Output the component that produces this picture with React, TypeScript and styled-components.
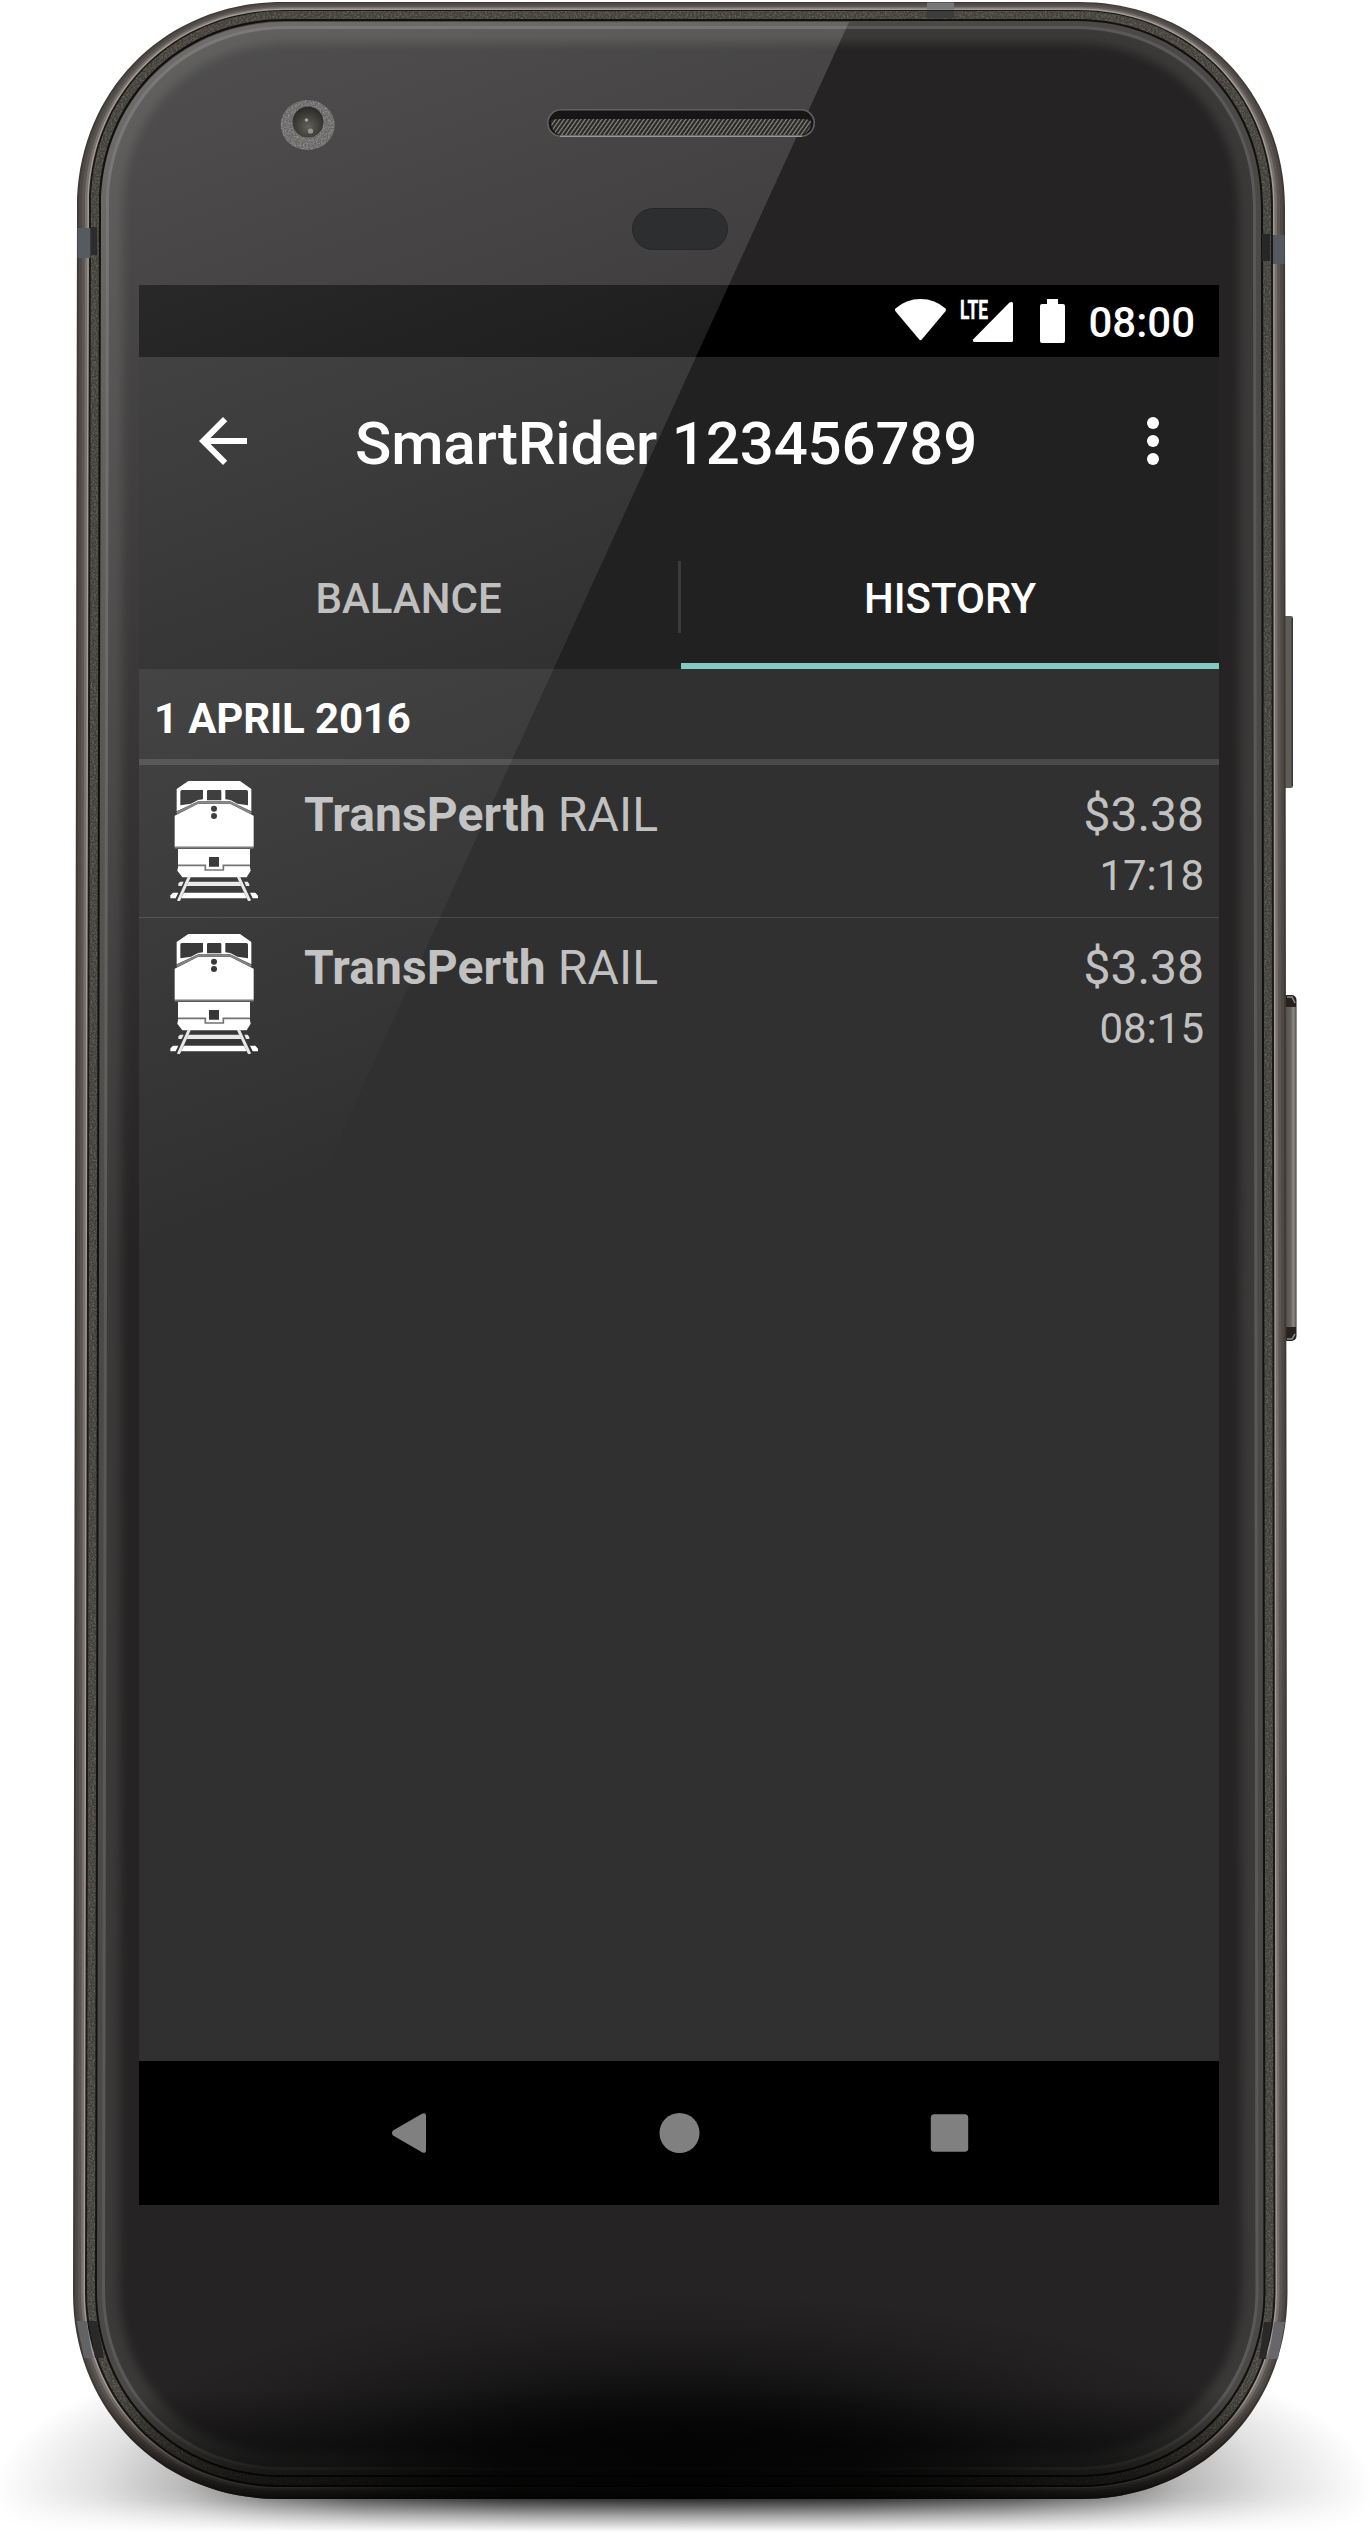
import React from 'react';
import styled, { createGlobalStyle } from 'styled-components';

const GlobalStyle = createGlobalStyle`
  html, body { margin: 0; padding: 0; background: #fff; }
  body { font-family: Roboto, "Liberation Sans", sans-serif; overflow: hidden; }
  * { box-sizing: border-box; }
`;

const Phone = styled.div`
  position: relative;
  width: 1370px;
  height: 2534px;
  padding: 285px 151px 329px 139px;
  overflow: hidden;
  background: #fff;
`;

const Artwork = styled.svg`
  position: absolute;
  inset: 0;
  pointer-events: none;
`;

const Screen = styled.main`
  position: relative;
  display: flex;
  flex-direction: column;
  width: 1080px;
  height: 1920px;
  background: #303030;
  color: #fff;
`;

const StatusBar = styled.div`
  display: flex;
  align-items: center;
  justify-content: flex-end;
  height: 72px;
  padding-right: 24px;
  background: #000;
`;

const Clock = styled.span`
  margin-left: 22px;
  padding-top: 4px;
  font-size: 42px;
  line-height: 48px;
  font-weight: 500;
`;

const Toolbar = styled.header`
  display: flex;
  align-items: center;
  height: 168px;
  padding: 0 30px 0 48px;
  background: #212121;
`;

const IconButton = styled.button`
  display: flex;
  width: 72px;
  height: 72px;
  padding: 0;
  border: 0;
  background: none;
  color: inherit;
`;

const Title = styled.h1`
  flex: 1;
  margin: 0 0 0 96px;
  padding-top: 5px;
  font-size: 60px;
  line-height: 72px;
  font-weight: 500;
  letter-spacing: -0.17px;
`;

const Tabs = styled.nav`
  display: grid;
  grid-template-columns: 539px 3px 538px;
  align-items: center;
  height: 144px;
  background: #212121;
`;

const Tab = styled.button<{ $active?: boolean }>`
  height: 144px;
  padding: ${p => (p.$active ? '9px 0 0' : '3px 0 0')};
  border: 0;
  border-bottom: ${p => (p.$active ? '6px solid #80cbc4' : '0')};
  background: none;
  font: 500 42px/48px Roboto, "Liberation Sans", sans-serif;
  color: ${p => (p.$active ? '#fff' : 'rgba(255, 255, 255, 0.7)')};
`;

const TabDivider = styled.span`
  height: 72px;
  background: #3b3b3b;
`;

const History = styled.section`
  flex: 1;
`;

const DateHeading = styled.h2`
  height: 96px;
  margin: 0;
  padding: 26px 16px 0 15px;
  border-bottom: 6px solid #4a4a4a;
  font-size: 42px;
  line-height: 48px;
  font-weight: 700;
  letter-spacing: -0.15px;
`;

const Trip = styled.article`
  display: flex;
  height: 152px;
  padding: 16px;
  color: #c1c1c1;

  & + & {
    height: 153px;
    border-top: 1px solid #4a4a4a;
  }
`;

const Operator = styled.div`
  flex: 1;
  padding: 6px 0 0 29px;
  font-size: 48px;
  line-height: 56px;
  letter-spacing: 0.12px;
`;

const Figures = styled.div`
  display: flex;
  flex-direction: column;
  align-items: flex-end;
  gap: 8px;
  margin-right: -1px;
  padding-top: 6px;
`;

const Fare = styled.span`
  font-size: 48px;
  line-height: 56px;
`;

const Time = styled.time`
  font-size: 42px;
  line-height: 50px;
`;

const NavBar = styled.footer`
  display: flex;
  align-items: center;
  justify-content: center;
  gap: 95px;
  height: 144px;
  background: #000;
  color: #808080;
`;

/* Outline of the handset; the sides widen slightly towards the bottom. */
function shell(i: number, topInset: number) {
  const lt = 77 + i, lb = 73 + i, rt = 1285 - i, rb = 1287.5 - i;
  const t = 2 + topInset, b = 2499 - i;
  const r = 206 - i * 0.9, k = r * 0.43;
  return [
    `M${lt + r} ${t}H${rt - r}`,
    `C${rt - k} ${t} ${rt} ${t + k} ${rt} ${t + r}`,
    `L${rb} ${b - r}`,
    `C${rb} ${b - k} ${rb - k} ${b} ${rb - r} ${b}`,
    `H${lb + r}`,
    `C${lb + k} ${b} ${lb} ${b - k} ${lb} ${b - r}`,
    `L${lt} ${t + r}`,
    `C${lt} ${t + k} ${lt + k} ${t} ${lt + r} ${t}Z`,
  ].join('');
}

const RINGS: [number, number, string][] = [
  [0, 0, '#3f3a37'],
  [2, 1, '#4f4946'],
  [5, 3, '#5c5652'],
  [8, 5, '#77716d'],
  [10.5, 6.5, '#a09b96'],
  [12, 8, '#1b1816'],
];

function Handset() {
  return (
    <Artwork width="1370" height="2534" viewBox="0 0 1370 2534" aria-hidden>
      <defs>
        <filter id="soft5" x="-5%" y="-5%" width="110%" height="110%" colorInterpolationFilters="sRGB"><feGaussianBlur stdDeviation="5" /></filter>
        <filter id="grain" x="0" y="0" width="100%" height="100%" colorInterpolationFilters="sRGB">
          <feTurbulence type="fractalNoise" baseFrequency="0.55" numOctaves="2" seed="4" />
          <feColorMatrix values="0 0 0 0 0.46  0 0 0 0 0.45  0 0 0 0 0.41  1.6 0 0 0 -0.6" />
          <feComposite in2="SourceGraphic" operator="in" result="n" />
          <feMerge><feMergeNode in="SourceGraphic" /><feMergeNode in="n" /></feMerge>
        </filter>
        <radialGradient id="floorShadow" gradientUnits="userSpaceOnUse" cx="0" cy="0" r="1" gradientTransform="translate(684 2490) scale(690 190)">
          <stop offset="0" stopOpacity=".92" /><stop offset=".27" stopOpacity=".86" />
          <stop offset=".48" stopOpacity=".7" /><stop offset=".61" stopOpacity=".5" />
          <stop offset=".72" stopOpacity=".28" /><stop offset=".85" stopOpacity=".12" />
          <stop offset="1" stopOpacity="0" />
        </radialGradient>
        <linearGradient id="floorFade" x1="0" y1="2490" x2="0" y2="2532" gradientUnits="userSpaceOnUse">
          <stop offset="0" stopColor="#fff" /><stop offset=".25" stopColor="#ddd" />
          <stop offset=".62" stopColor="#666" /><stop offset="1" stopColor="#000" />
        </linearGradient>
        <mask id="floorMask" maskUnits="userSpaceOnUse" x="0" y="2250" width="1370" height="284">
          <rect x="0" y="2250" width="1370" height="284" fill="url(#floorFade)" />
        </mask>
        <radialGradient id="chinShade" gradientUnits="userSpaceOnUse" cx="0" cy="0" r="1" gradientTransform="translate(682 2478) scale(600 185)">
          <stop offset="0" stopOpacity=".9" /><stop offset=".3" stopOpacity=".8" />
          <stop offset=".45" stopOpacity=".6" /><stop offset=".62" stopOpacity=".32" />
          <stop offset=".82" stopOpacity=".12" /><stop offset="1" stopOpacity="0" />
        </radialGradient>
        <linearGradient id="rimShade" x1="0" y1="2390" x2="0" y2="2499" gradientUnits="userSpaceOnUse">
          <stop offset="0" stopOpacity="0" /><stop offset="1" stopOpacity=".75" />
        </linearGradient>
        <linearGradient id="keyFace" x1="0" x2="1" y1="0" y2="0">
          <stop offset="0" stopColor="#4f4b47" /><stop offset=".55" stopColor="#66635c" />
          <stop offset=".8" stopColor="#8c8983" /><stop offset="1" stopColor="#5b5955" />
        </linearGradient>
        <clipPath id="bodyClip"><path d={shell(0, 0)} /></clipPath>
        <clipPath id="glassClip"><path d={shell(32, 27)} /></clipPath>
      </defs>

      <rect x="0" y="2290" width="1370" height="244" fill="url(#floorShadow)" mask="url(#floorMask)" />

      <rect x="1282" y="616" width="11" height="172" rx="2" fill="#5f5b57" />
      <rect x="1291.500" y="618" width="1.500" height="168" fill="#393633" />
      <rect x="1282" y="995" width="14.500" height="346" rx="5" fill="#24211f" />
      <rect x="1284" y="1007" width="12" height="320" fill="url(#keyFace)" />
      <path d="M1287 997h5l3 6M1287 1339h5l3-5" stroke="#8e8b86" strokeWidth="1.500" fill="none" />

      {RINGS.map(([i, t, fill]) => <path key={i} d={shell(i, t)} fill={fill} />)}
      <path d={shell(14, 9)} fill="#413f39" filter="url(#grain)" />
      <path d={shell(22, 17)} fill="#13110f" />
      <path d={shell(24, 19)} fill="#4a4947" />
      <path d={shell(29, 24)} fill="#5a5957" />
      <path d={shell(32, 27)} fill="#3b3a39" />
      <g clipPath="url(#glassClip)">
        <path d={shell(46, 41)} fill="#252324" filter="url(#soft5)" />
      </g>

      <g>
        <path d="M77.500 228h13v30h-13z" fill="#565a61" /><path d="M91 227h6v28h-6z" fill="#2c2c2e" />
        <path d="M1273 235h11.500v29H1273z" fill="#565860" /><path d="M1262 234h8v27h-8z" fill="#282727" />
        <path d="M927 2.500h27v7h-27z" fill="#77777b" /><path d="M927 11h27v7h-27z" fill="#3d3c3d" />
        <path d="M76.500 2321h10l6 37H84z" fill="#626365" /><path d="M89 2321h8l7 37H95z" fill="#29292a" />
        <path d="M1274 2322h11l-7 37h-9z" fill="#66666b" /><path d="M1264 2322h8l-6 37h-7z" fill="#29292a" />
      </g>

      <g clipPath="url(#bodyClip)">
        <rect x="60" y="2290" width="1240" height="215" fill="url(#chinShade)" />
        <rect x="60" y="2390" width="1240" height="112" fill="url(#rimShade)" />
      </g>
    </Artwork>
  );
}

function FrontGlass() {
  return (
    <Artwork width="1370" height="2534" viewBox="0 0 1370 2534" aria-hidden>
      <defs>
        <linearGradient id="glare" gradientUnits="userSpaceOnUse" x1="0" y1="0" x2="418" y2="1158">
          <stop offset="0" stopColor="#fff" stopOpacity=".215" />
          <stop offset="1" stopColor="#fff" stopOpacity="0" />
        </linearGradient>
        <pattern id="mesh" width="4.200" height="4" patternUnits="userSpaceOnUse" patternTransform="skewX(-35)">
          <rect width="4.200" height="4" fill="#2c2b29" /><rect width="1.600" height="4" fill="#7c7a76" />
        </pattern>
        <filter id="ringGrain" x="0" y="0" width="100%" height="100%" colorInterpolationFilters="sRGB">
          <feTurbulence type="fractalNoise" baseFrequency="0.6" numOctaves="2" seed="8" />
          <feColorMatrix values="0 0 0 0 0.6  0 0 0 0 0.595  0 0 0 0 0.59  2 0 0 0 -0.75" />
          <feComposite in2="SourceGraphic" operator="in" result="n" />
          <feMerge><feMergeNode in="SourceGraphic" /><feMergeNode in="n" /></feMerge>
        </filter>
        <radialGradient id="lens" cx=".5" cy=".65" r=".6">
          <stop offset="0" stopColor="#62615d" /><stop offset=".5" stopColor="#45443f" />
          <stop offset="1" stopColor="#2d2c29" />
        </radialGradient>
        <clipPath id="glareClip"><path d={shell(24, 20)} /></clipPath>
      </defs>
      <path d="M0 22H849L279 1270H0Z" fill="url(#glare)" clipPath="url(#glareClip)" />

      <ellipse cx="307.700" cy="125" rx="27" ry="25" fill="#696767" filter="url(#ringGrain)" />
      <circle cx="308" cy="122" r="15.500" fill="url(#lens)" />
      <circle cx="306.500" cy="120" r="1.800" fill="#a5a39f" />
      <circle cx="310.500" cy="131" r="2.600" fill="#989691" />

      <rect x="547.800" y="109.800" width="266.400" height="26.400" rx="13.200" fill="#171616" stroke="#62605f" strokeWidth="1.600" />
      <path d="M560 136.300H802" stroke="#9a9895" strokeWidth="1.400" />
      <path d="M551 121q2-2 6-2H804q4 0 7 2q1 6-4 11q-2 3-7 3H562q-5 0-8-4q-3-4-3-10Z" fill="url(#mesh)" />
      <rect x="632.500" y="208.500" width="95" height="41" rx="20.500" fill="#2d2e2f" stroke="#272728" />
    </Artwork>
  );
}

function StatusIcons() {
  return (
    <svg width="172" height="50" viewBox="894 296 172 50" fill="#fff" aria-hidden>
      <path d="M895.500 308.500Q906 299 920.500 299T945.500 308.500Q946.500 309.500 945.700 311L922 339.300Q920.500 341 919 339.300L895.300 311Q894.500 309.500 895.500 308.500Z" />
      <text x="960" y="319" fontFamily="Roboto, sans-serif" fontSize="25.500" fontWeight="700" textLength="28" lengthAdjust="spacingAndGlyphs" stroke="#fff" strokeWidth=".4">LTE</text>
      <path d="M1013 303.500V340.500Q1013 342 1011.500 342H974.500Q973 342 973 340.500V339.500L1009.500 302.500Q1013 301 1013 303.500Z" />
      <path d="M1047 299h11v5h5q2 0 2 2v35q0 2-2 2h-21q-2 0-2-2v-35q0-2 2-2h5z" />
    </svg>
  );
}

function TrainIcon() {
  return (
    <svg width="120" height="120" viewBox="75 303 360 360" fill="#fff" aria-hidden>
      <path fillRule="evenodd" d="M175 303H330L364 327V394L300 364H205L140 394V327Z
        M156 330Q151 330 151 335V376L183 371L204 360L219 358V330Z
        M235 330Q231 330 231 334V361H274V334Q274 330 270 330Z
        M286 330V358L301 360L322 371L354 376V335Q354 330 349 330Z" />
      <path d="M140 399L205 367H300L364 399" stroke="#808080" strokeWidth="6" fill="none" />
      <path fillRule="evenodd" d="M134 407L205 371H300L371 407V500H134Z
        M243 386a9 9 0 1 0 18 0a9 9 0 1 0-18 0Z M243 408a9 9 0 1 0 18 0a9 9 0 1 0-18 0Z" />
      <path d="M134 503H371" stroke="#777" strokeWidth="5" />
      <path fillRule="evenodd" d="M144 507H360V562L362 572L350 592H157L142 572L144 562Z M237 531V560H267V531Z" />
      <path d="M144 556H226V570H280V556H360" stroke="#6d6d6d" strokeWidth="5" fill="none" />
      <path d="M178 590L145 663M325 590L359 663" stroke="#e6e6e6" strokeWidth="9" />
      <path fill="#e8e8e8" d="M151 605h10l-6 13h-10v-8zM176 605H328L334 618H170zM343 605h10l5 7v6h-10z" />
      <path d="M129 638h16l-8 17h-16v-9zM162 638H342L350 655H153zM360 638h16l8 9v8h-16z" />
    </svg>
  );
}

const trips = [
  { operator: 'TransPerth', mode: 'RAIL', fare: '$3.38', time: '17:18' },
  { operator: 'TransPerth', mode: 'RAIL', fare: '$3.38', time: '08:15' },
];

export default function App() {
  return (
    <>
      <GlobalStyle />
      <Phone>
        <Handset />
        <Screen>
          <StatusBar>
            <StatusIcons />
            <Clock>08:00</Clock>
          </StatusBar>
          <Toolbar>
            <IconButton aria-label="Back">
              <svg width="72" height="72" viewBox="0 0 24 24" fill="currentColor">
                <path d="M20 11H7.830l5.590-5.590L12 4l-8 8 8 8 1.410-1.410L7.830 13H20v-2z" />
              </svg>
            </IconButton>
            <Title>SmartRider 123456789</Title>
            <IconButton aria-label="More">
              <svg width="72" height="72" viewBox="0 0 24 24" fill="currentColor">
                <circle cx="12" cy="6" r="2" /><circle cx="12" cy="12" r="2" /><circle cx="12" cy="18" r="2" />
              </svg>
            </IconButton>
          </Toolbar>
          <Tabs>
            <Tab>BALANCE</Tab>
            <TabDivider />
            <Tab $active>HISTORY</Tab>
          </Tabs>
          <History>
            <DateHeading>1 APRIL 2016</DateHeading>
            {trips.map(trip => (
              <Trip key={trip.time}>
                <TrainIcon />
                <Operator><b>{trip.operator}</b> {trip.mode}</Operator>
                <Figures>
                  <Fare>{trip.fare}</Fare>
                  <Time>{trip.time}</Time>
                </Figures>
              </Trip>
            ))}
          </History>
          <NavBar>
            <svg width="175" height="60" viewBox="322 2103 175 60" fill="currentColor" aria-label="Back">
              <path d="M393 2130.500L422 2113.700Q426 2112 426 2116V2150Q426 2154 422 2152.300L393 2135.500Q391 2133 393 2130.500Z" />
            </svg>
            <svg width="175" height="60" viewBox="591.500 2103 175 60" fill="currentColor" aria-label="Home">
              <circle cx="679" cy="2133" r="20" />
            </svg>
            <svg width="175" height="60" viewBox="861.500 2103 175 60" fill="currentColor" aria-label="Overview">
              <rect x="930.300" y="2114.300" width="37.400" height="37.400" rx="3.500" />
            </svg>
          </NavBar>
        </Screen>
        <FrontGlass />
      </Phone>
    </>
  );
}
